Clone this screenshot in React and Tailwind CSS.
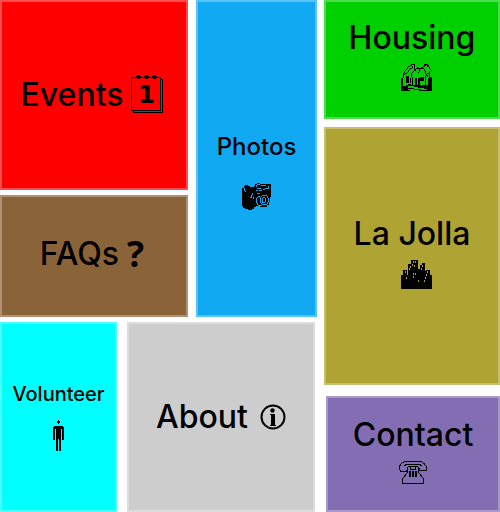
import React from "react";

function CalendarIcon() {
  return (
    <span className="relative flex h-10 w-8 items-center justify-center">
      <svg className="absolute inset-0" width="32" height="40" viewBox="0 0 32 40" shapeRendering="crispEdges" fill="none" stroke="black" aria-hidden="true">
        <path d="M.5 2.5h29v33H.5zM2.5 35.5v2h29v-33h-2" />
        <g fill="black" stroke="none">
          <path d="M5 1h1V0h3v1h1v1H8v1h1v1H6V3H5zM13 1h1V0h3v1h1v1h-2v1h1v1h-3V3h-1zM21 1h1V0h3v1h1v1h-2v1h1v1h-3V3h-1z" />
        </g>
      </svg>
      <span className="relative pr-0.5 font-['DejaVu_Sans',sans-serif] text-2xl leading-none font-bold">1</span>
    </span>
  );
}

function CameraIcon() {
  return (
    <svg width="29" height="27" viewBox="0 0 29 27" shapeRendering="crispEdges" aria-hidden="true">
      <path d="M0 5h2V3h1V2h3v1h2v1h4V3h1V1h2V0h3v1h11v13h-1v5h-1v3h-2v2h-7v-1h-4v1h-2v2h-2v1H6v-1H3v-1H1v-2H0z" fill="black" />
      <g fill="#11aaf2">
        <path d="M2 5h1v3H2zM3 8h1v1H3zM15 1h3v1h-3zM14 2h1v2h-1zM19 2h5v1h-5zM15 5h4v1h-4zM17 7h3v1h-3zM14 7h2v1h-2zM21 6h2v1h-2zM23 5h4v1h-4zM26 3h1v2h-1zM10 10h1v2h-1zM9 12h1v2H9zM8 14h2v1H8zM11 14h1v2h-1zM15 10h3v1h-3z" />
        <path d="M16 13h2v1h-2zM15 14h1v1h-1zM14 15h1v5h-1zM15 20h1v2h-1zM16 22h4v1h-4zM20 12h5v1h-5zM25 13h1v2h-1zM26 15h1v4h-1zM25 19h1v2h-1zM20 21h5v1h-5zM19 13h1v1h-1zM18 14h1v6h-1zM19 20h1v1h-1zM21 14h2v1h-2zM20 15h1v5h-1zM23 15h1v4h-1zM21 19h2v1h-2z" />
      </g>
    </svg>
  );
}

function HousesIcon() {
  return (
    <svg width="31" height="27" viewBox="0 0 31 27" shapeRendering="crispEdges" aria-hidden="true">
      <g fill="black">
        <path d="M0 14h2v8h3v-1h2v-1h3v1h4v-7h2v7h1v-7h2v7h8v-7h1v-1h3v14H18v-1h-5v-1H7v1h2v1H0zM5 12h3v7H5zM9 14h1v5H9zM19 13h4v4h-4z" />
        <path d="M2 9h1v5H2zM3 7h1v2H3zM4 6h1v1H4zM5 5h1v1H5zM6 3h1v2H6zM7 2h2v1H7zM9 1h2v1H9zM10 0h4v1h-4zM13 1h1v4h-1zM11 2h1v2h-1zM9 4h2v1H9zM8 5h1v1H8zM7 6h1v2H7zM6 8h1v1H6zM4 9h2v1H4zM3 10h1v1H3z" />
        <path d="M11 8h1v1h-1zM12 7h1v1h-1zM13 5h2v2h-2zM15 4h8v1h-8zM16 3h1v1h-1zM23 5h1v2h-1zM24 7h1v3h-1zM25 10h1v2h-1zM10 9h1v4h-1zM11 13h1v8h-1zM18 5h1v3h-1zM17 8h1v1h-1zM24 12h1v9h-1zM20 3h2v1h-2zM22 2h2v1h-2zM23 1h2v1h-2zM23 0h4v1h-4zM26 1h2v2h-2zM28 3h1v2h-1zM29 5h1v1h-1zM30 6h1v1h-1zM28 7h1v6h-1zM26 9h2v1h-2zM26 11h1v2h-1z" />
      </g>
      <path d="M7 22h6v1h4v1h6v1h3v1h-6v-1h-7v-1H7z" fill="#00cf00" />
    </svg>
  );
}

function CityIcon() {
  return (
    <svg width="31" height="29" viewBox="0 0 31 29" shapeRendering="crispEdges" aria-hidden="true">
      <path d="M0 15h2v-5h4v3h1V4h3V0h7v9h2V5h2V3h3v8h1v-1h4v5h2v14H0z" fill="black" />
      <path d="M12 1h1v2h-1zM14 1h1v2h-1zM11 4h1v2h-1zM13 5h1v2h-1zM9 6h1v2H9zM8 8h1v2H8zM4 11h1v2H4zM6 13h1v2H6zM5 17h1v2H5zM12 13h1v2h-1zM14 13h1v2h-1zM12 16h1v2h-1zM21 5h1v2h-1zM20 8h1v2h-1zM26 11h1v2h-1zM25 14h1v2h-1zM24 17h1v2h-1zM17 20h1v2h-1zM23 20h1v2h-1z" fill="#afa333" />
    </svg>
  );
}

function PhoneIcon() {
  return (
    <svg width="28" height="23" viewBox="0 0 28 23" shapeRendering="crispEdges" fill="none" stroke="black" aria-hidden="true">
      <path d="M6 .500h16l3 2 2.500 3v4H20V7l-2-2H10L8 7v2l-1 1.500H2l-1.500-2V5L3 2zM5 5l3-2h12l3 2" />
      <path d="M8.500 6v5l-5 7v4.500h21V18l-5-7V6M11.500 5v3.500h5V5" />
      <path d="M11 10v6M14 10v6M17 10v6" strokeWidth="2" />
    </svg>
  );
}

function PersonIcon() {
  return (
    <svg width="11" height="31" viewBox="0 0 11 31" shapeRendering="crispEdges" aria-hidden="true">
      <path d="M5 0h1v1h1v2H6v1H5V3H4V1h1zM1 6h9v1h1v13H9V9H8v22H6V19H5v12H3V9H2v11H0V7h1z" fill="black" />
    </svg>
  );
}

function InfoIcon() {
  return (
    <svg width="26" height="26" viewBox="0 0 26 26" aria-hidden="true">
      <circle cx="13" cy="13" r="11.500" fill="none" stroke="black" strokeWidth="2" />
      <circle cx="12.500" cy="6.500" r="2.200" fill="black" />
      <path d="M10 10h5v11h1v1h-6v-1h1V11h-1z" fill="black" />
    </svg>
  );
}

const tile = "flex items-center justify-center border-2 border-white/30";

export default function App() {
  return (
    <nav
      aria-label="Main"
      className="grid min-h-screen w-full grid-cols-[317fr_176fr] gap-[7px] bg-white font-['Inter',sans-serif] text-[32px] leading-9 font-medium text-black"
    >
      <div className="grid grid-rows-[317fr_190fr] gap-[5px]">
        <div className="grid grid-cols-[188fr_121fr] gap-2">
          <div className="grid grid-rows-[190fr_122fr] gap-[5px]">
            <a href="#events" className={`${tile} gap-2 bg-[#ff0000] pr-1`}>
              <span>Events</span>
              <CalendarIcon />
            </a>
            <a href="#faqs" className={`${tile} gap-2 bg-[#8b6338] pr-1 pb-1`}>
              <span>FAQs</span>
              <span className="font-['Open_Sans',sans-serif] text-4xl leading-9 font-bold">?</span>
            </a>
          </div>
          <a href="#photos" className={`${tile} flex-col gap-5 bg-[#11aaf2] pt-6 text-2xl`}>
            <span>Photos</span>
            <CameraIcon />
          </a>
        </div>
        <div className="grid grid-cols-[117fr_188fr] gap-2.5 pr-0.5">
          <a href="#volunteer" className={`${tile} flex-col gap-2 bg-[#00ffff] pb-2 text-xl`}>
            <span className="leading-9">Volunteer</span>
            <PersonIcon />
          </a>
          <a href="#about" className={`${tile} gap-3 bg-[#cdcdcd]`}>
            <span>About</span>
            <InfoIcon />
          </a>
        </div>
      </div>
      <div className="grid grid-rows-[119fr_258fr_119fr] gap-2">
        <a href="#housing" className={`${tile} flex-col gap-2 bg-[#00cf00] pb-2`}>
          <span>Housing</span>
          <span className="flex pl-2">
            <HousesIcon />
          </span>
        </a>
        <a href="#la-jolla" className={`${tile} flex-col gap-2 bg-[#afa333] pb-2`}>
          <span>La Jolla</span>
          <span className="flex pl-2">
            <CityIcon />
          </span>
        </a>
        <a href="#contact" className={`${tile} mt-[3px] ml-0.5 flex-col gap-2 bg-[#846eb3] pb-2`}>
          <span>Contact</span>
          <PhoneIcon />
        </a>
      </div>
    </nav>
  );
}
